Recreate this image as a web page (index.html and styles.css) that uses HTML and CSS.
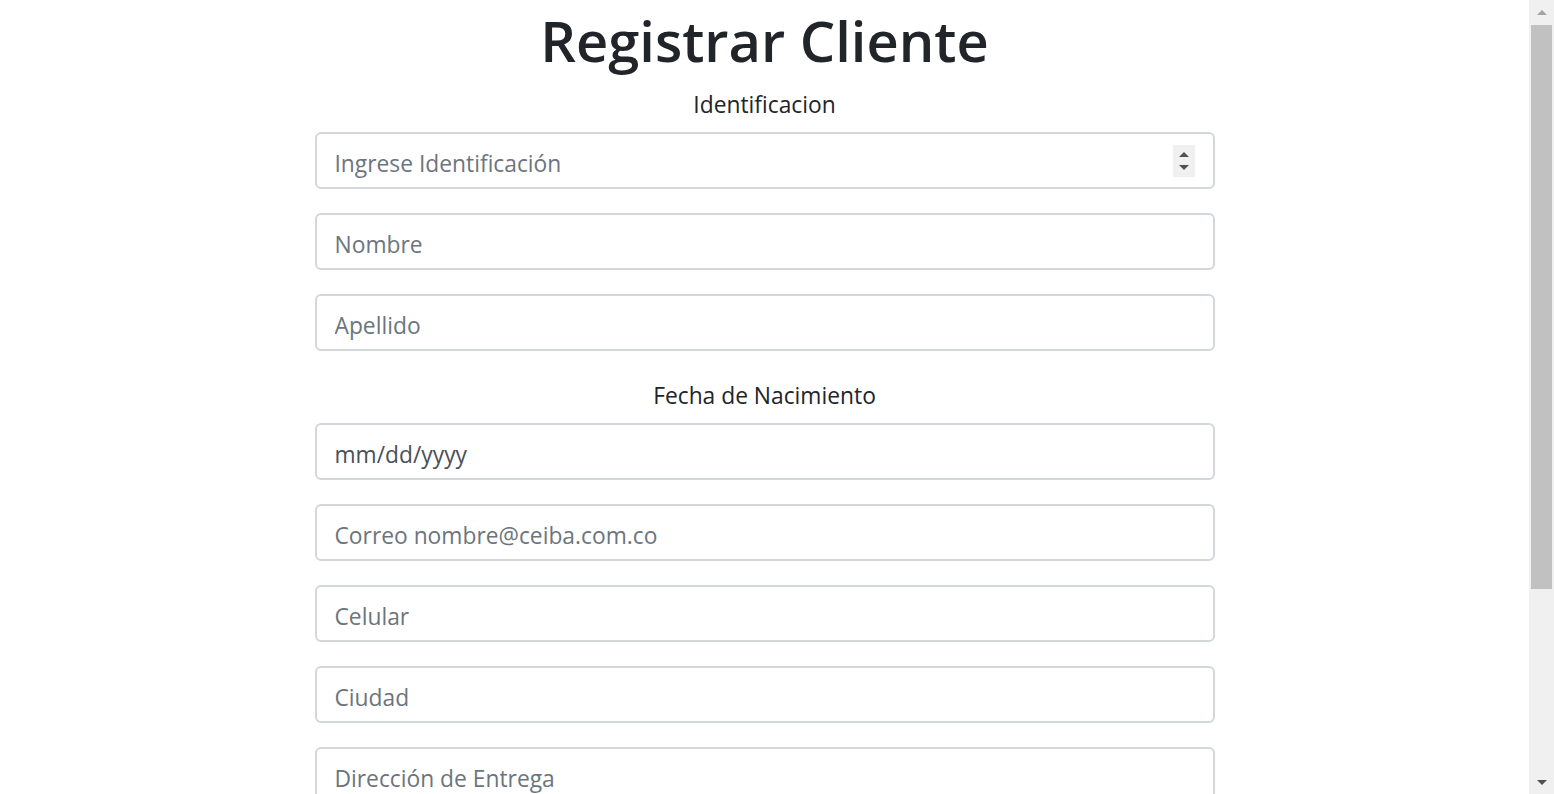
FILE: index.html
```html
<!DOCTYPE html>
<html lang="es">
<head>
<meta charset="utf-8">
<title>Registrar Cliente</title>
<link rel="stylesheet" href="styles.css">
</head>
<body>
<div class="viewport">
  <main class="page">
    <div class="container">
      <h1 class="title">Registrar Cliente</h1>
      <form class="form">
        <div class="form-group">
          <label class="label" for="ident">Identificacion</label>
          <div class="num-wrap">
            <input class="form-control" id="ident" type="number" placeholder="Ingrese Identificación">
            <span class="spin" aria-hidden="true"><span class="up"></span><span class="down"></span></span>
          </div>
        </div>
        <div class="form-group">
          <input class="form-control" type="text" placeholder="Nombre">
        </div>
        <div class="form-group">
          <input class="form-control" type="text" placeholder="Apellido">
        </div>
        <div class="form-group">
          <label class="label" for="fecha">Fecha de Nacimiento</label>
          <input class="form-control date" id="fecha" type="text" placeholder="mm/dd/yyyy">
        </div>
        <div class="form-group">
          <input class="form-control" type="email" placeholder="Correo nombre@ceiba.com.co">
        </div>
        <div class="form-group">
          <input class="form-control" type="text" placeholder="Celular">
        </div>
        <div class="form-group">
          <input class="form-control" type="text" placeholder="Ciudad">
        </div>
        <div class="form-group">
          <input class="form-control" type="text" placeholder="Dirección de Entrega">
        </div>
        <div class="form-group">
          <input class="form-control" type="password" placeholder="Contraseña">
        </div>
        <div class="actions">
          <button class="btn" type="submit">Registrar</button>
        </div>
      </form>
    </div>
  </main>
  <div class="scrollbar" aria-hidden="true">
    <div class="sb-button"><span class="arrow-up"></span></div>
    <div class="sb-track">
      <div class="sb-thumb"></div>
    </div>
    <div class="sb-button"><span class="arrow-down"></span></div>
  </div>
</div>
</body>
</html>
```

FILE: styles.css
```css
html, body {
  height: 100%;
}

body {
  margin: 0;
  overflow: hidden;
  background: #fff;
  color: #212529;
  font-family: "Open Sans", "Noto Sans", sans-serif;
  font-size: 22.8px;
  line-height: 36px;
}

.viewport {
  display: flex;
  height: 100vh;
}

.page {
  flex: 1;
  min-width: 0;
  overflow: hidden;
}

/* imitation of the browser scrollbar shown in the screenshot */
.scrollbar {
  flex: 0 0 25px;
  display: flex;
  flex-direction: column;
  background: #f0f0f0;
}

.sb-button {
  flex: 0 0 25px;
  display: flex;
  align-items: center;
  justify-content: center;
}

.arrow-up {
  width: 0;
  height: 0;
  border-left: 5.5px solid transparent;
  border-right: 5.5px solid transparent;
  border-bottom: 5.5px solid #a3a3a3;
  margin-top: -1px;
}

.arrow-down {
  width: 0;
  height: 0;
  border-left: 5.5px solid transparent;
  border-right: 5.5px solid transparent;
  border-top: 5.5px solid #505050;
  margin-top: 2px;
}

.sb-track {
  flex: 1;
  display: flex;
  flex-direction: column;
  padding: 0 2px;
}

.sb-thumb {
  height: 564px;
  background: #c1c1c1;
}

.container {
  width: 900px;
  margin: 0 auto;
  padding-bottom: 150px;
}

.title {
  margin: 0 0 12px;
  padding-top: 4px;
  height: 68px;
  font-size: 56px;
  font-weight: 600;
  line-height: 72px;
  text-align: center;
}

.form {
  margin: 0;
}

.form-group {
  margin-bottom: 24px;
}

.label {
  display: block;
  padding-top: 3px;
  margin-bottom: 9px;
  text-align: center;
}

.num-wrap {
  position: relative;
}

.form-control {
  display: block;
  box-sizing: border-box;
  width: 100%;
  height: 57px;
  margin: 0;
  padding: 11px 18px 6px;
  border: 2px solid #d3d7dc;
  border-radius: 6px;
  background: #fff;
  color: #495057;
  font-family: inherit;
  font-size: 22.8px;
  line-height: 36px;
  outline: none;
}

.form-control::placeholder {
  color: #6c757d;
  opacity: 1;
}

.form-control.date::placeholder {
  color: #495057;
}

.form-control[type="number"] {
  -moz-appearance: textfield;
}
.form-control::-webkit-inner-spin-button,
.form-control::-webkit-outer-spin-button {
  -webkit-appearance: none;
  margin: 0;
}

.spin {
  position: absolute;
  top: 13px;
  right: 20px;
  width: 22px;
  height: 32px;
  background: #f0f0f0;
  display: flex;
  flex-direction: column;
  align-items: center;
  justify-content: space-between;
  padding: 7px 0;
  box-sizing: border-box;
}

.spin .up {
  width: 0;
  height: 0;
  border-left: 5px solid transparent;
  border-right: 5px solid transparent;
  border-bottom: 5px solid #505050;
}

.spin .down {
  width: 0;
  height: 0;
  border-left: 5px solid transparent;
  border-right: 5px solid transparent;
  border-top: 5px solid #505050;
}

.actions {
  text-align: center;
}

.btn {
  padding: 9px 18px;
  border: 2px solid #007bff;
  border-radius: 6px;
  background: #007bff;
  color: #fff;
  font-family: inherit;
  font-size: 22.8px;
  line-height: 36px;
}
```
